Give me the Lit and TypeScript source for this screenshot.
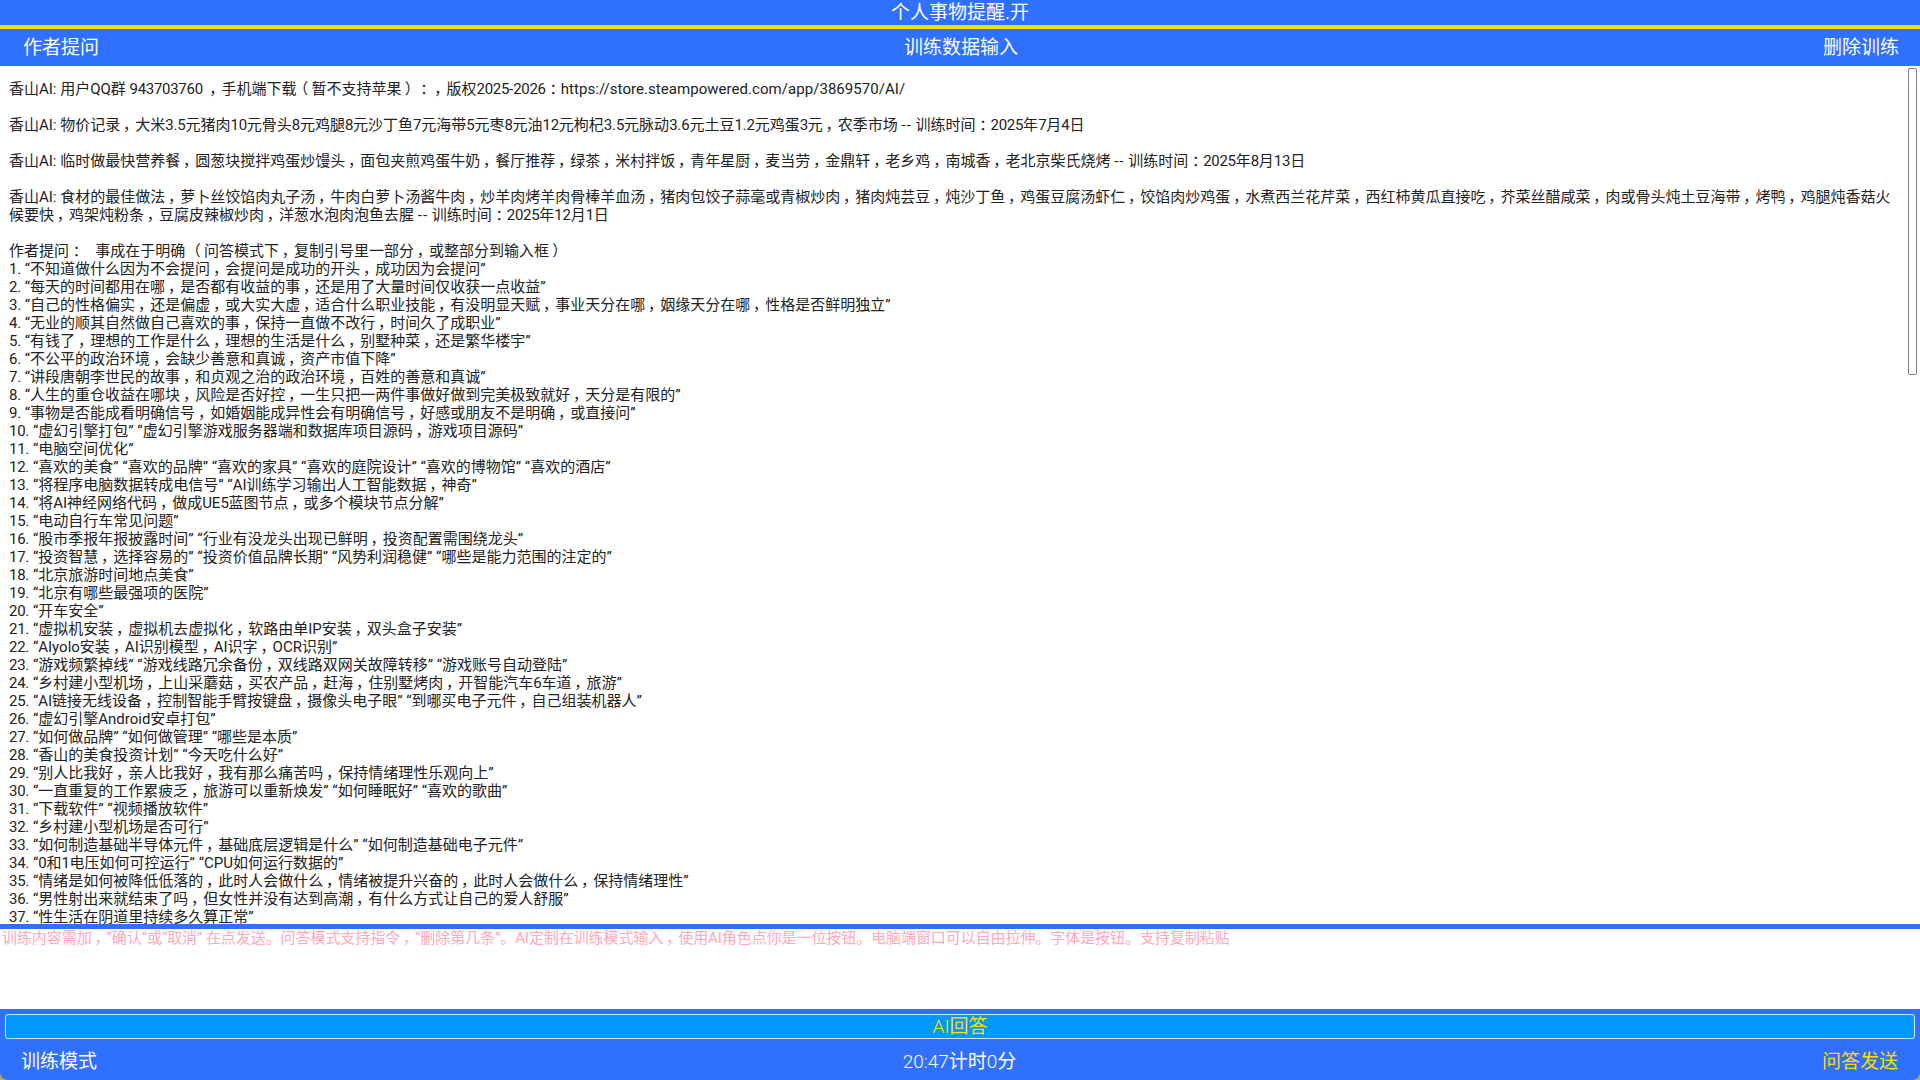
import { LitElement, html, css } from "lit";
import { customElement } from "lit/decorators.js";

const BLOCKS: string[][] = [
  ["香山AI: 用户QQ群 943703760 ，手机端下载（暂不支持苹果）：，版权2025-2026：https://store.steampowered.com/app/3869570/AI/"],
  ["香山AI: 物价记录，大米3.5元猪肉10元骨头8元鸡腿8元沙丁鱼7元海带5元枣8元油12元枸杞3.5元脉动3.6元土豆1.2元鸡蛋3元，农季市场 -- 训练时间：2025年7月4日"],
  ["香山AI: 临时做最快营养餐，圆葱块搅拌鸡蛋炒馒头，面包夹煎鸡蛋牛奶，餐厅推荐，绿茶，米村拌饭，青年星厨，麦当劳，金鼎轩，老乡鸡，南城香，老北京柴氏烧烤 -- 训练时间：2025年8月13日"],
  ["香山AI: 食材的最佳做法，萝卜丝饺馅肉丸子汤，牛肉白萝卜汤酱牛肉，炒羊肉烤羊肉骨棒羊血汤，猪肉包饺子蒜毫或青椒炒肉，猪肉炖芸豆，炖沙丁鱼，鸡蛋豆腐汤虾仁，饺馅肉炒鸡蛋，水煮西兰花芹菜，西红柿黄瓜直接吃，芥菜丝醋咸菜，肉或骨头炖土豆海带，烤鸭，鸡腿炖香菇火候要快，鸡架炖粉条，豆腐皮辣椒炒肉，洋葱水泡肉泡鱼去腥 -- 训练时间：2025年12月1日"],
  [
    "作者提问：   事成在于明确 （问答模式下，复制引号里一部分，或整部分到输入框）",
    "1. “不知道做什么因为不会提问，会提问是成功的开头，成功因为会提问”",
    "2. “每天的时间都用在哪，是否都有收益的事，还是用了大量时间仅收获一点收益”",
    "3. “自己的性格偏实，还是偏虚，或大实大虚，适合什么职业技能，有没明显天赋，事业天分在哪，姻缘天分在哪，性格是否鲜明独立”",
    "4. “无业的顺其自然做自己喜欢的事，保持一直做不改行，时间久了成职业”",
    "5. “有钱了，理想的工作是什么，理想的生活是什么，别墅种菜，还是繁华楼宇”",
    "6. “不公平的政治环境，会缺少善意和真诚，资产市值下降”",
    "7. “讲段唐朝李世民的故事，和贞观之治的政治环境，百姓的善意和真诚”",
    "8. “人生的重仓收益在哪块，风险是否好控，一生只把一两件事做好做到完美极致就好，天分是有限的”",
    "9. “事物是否能成看明确信号，如婚姻能成异性会有明确信号，好感或朋友不是明确，或直接问”",
    "10. “虚幻引擎打包” “虚幻引擎游戏服务器端和数据库项目源码，游戏项目源码”",
    "11. “电脑空间优化”",
    "12. “喜欢的美食” “喜欢的品牌” “喜欢的家具” “喜欢的庭院设计” “喜欢的博物馆” “喜欢的酒店”",
    "13. “将程序电脑数据转成电信号” “AI训练学习输出人工智能数据，神奇”",
    "14. “将AI神经网络代码，做成UE5蓝图节点，或多个模块节点分解”",
    "15. “电动自行车常见问题”",
    "16. “股市季报年报披露时间” “行业有没龙头出现已鲜明，投资配置需围绕龙头”",
    "17. “投资智慧，选择容易的” “投资价值品牌长期” “风势利润稳健” “哪些是能力范围的注定的”",
    "18. “北京旅游时间地点美食”",
    "19. “北京有哪些最强项的医院”",
    "20. “开车安全”",
    "21. “虚拟机安装，虚拟机去虚拟化，软路由单IP安装，双头盒子安装”",
    "22. “AIyolo安装，AI识别模型，AI识字，OCR识别”",
    "23. “游戏频繁掉线” “游戏线路冗余备份，双线路双网关故障转移” “游戏账号自动登陆”",
    "24. “乡村建小型机场，上山采蘑菇，买农产品，赶海，住别墅烤肉，开智能汽车6车道，旅游”",
    "25. “AI链接无线设备，控制智能手臂按键盘，摄像头电子眼” “到哪买电子元件，自己组装机器人”",
    "26. “虚幻引擎Android安卓打包”",
    "27. “如何做品牌” “如何做管理” “哪些是本质”",
    "28. “香山的美食投资计划” “今天吃什么好”",
    "29. “别人比我好，亲人比我好，我有那么痛苦吗，保持情绪理性乐观向上”",
    "30. “一直重复的工作累疲乏，旅游可以重新焕发” “如何睡眠好” “喜欢的歌曲”",
    "31. “下载软件” “视频播放软件”",
    "32. “乡村建小型机场是否可行”",
    "33. “如何制造基础半导体元件，基础底层逻辑是什么” “如何制造基础电子元件”",
    "34. “0和1电压如何可控运行” “CPU如何运行数据的”",
    "35. “情绪是如何被降低低落的，此时人会做什么，情绪被提升兴奋的，此时人会做什么，保持情绪理性”",
    "36. “男性射出来就结束了吗，但女性并没有达到高潮，有什么方式让自己的爱人舒服”",
    "37. “性生活在阴道里持续多久算正常”",
  ],
];

const HINT =
  "训练内容需加，“确认”或“取消” 在点发送。问答模式支持指令，“删除第几条”。AI定制在训练模式输入，使用AI角色点你是一位按钮。电脑端窗口可以自由拉伸。字体是按钮。支持复制粘贴";

/* The reference's fallback font centres full-width punctuation in its cell, sets digits narrower and keeps "--" apart. */
const punct = (line: string) =>
  line
    .split(/(https:\S+|--|[，：（）]|\d+)/)
    .map((part, i) => {
      if (i % 2 === 0) return part;
      if (part.startsWith("http")) return html`<span class="u">${part}</span>`;
      if (part === "--") return html`<span class="h">${part}</span>`;
      if (/\d/.test(part)) return html`<span class="d">${part}</span>`;
      return html`<span class="p">${part}</span>`;
    });

@customElement("app-root")
export class AppRoot extends LitElement {
  static styles = css`
    :host {
      display: flex;
      flex-direction: column;
      width: 1920px;
      height: 1080px;
      overflow: hidden;
      background: #b4aa5a;
      font-family: Roboto, "Noto Sans CJK SC", sans-serif;
      font-variant-ligatures: none;
      font-feature-settings: "liga" 0, "clig" 0, "calt" 0;
      text-spacing-trim: space-all;
      color: #222;
    }
    .p {
      display: inline-block;
      width: 1em;
      text-align: center;
      font-feature-settings: "palt";
    }
    .d {
      letter-spacing: -0.3px;
    }
    .u {
      letter-spacing: 0.05px;
    }
    .h {
      letter-spacing: 1px;
    }
    .thin {
      font-weight: 300;
    }
    .title {
      height: 25px;
      flex: none;
      box-sizing: border-box;
      padding-top: 1px;
      background: #3070ff;
      color: #fff;
      font-size: 19px;
      line-height: 24px;
      text-align: center;
    }
    .rule {
      height: 4px;
      flex: none;
      background: #ffdd00;
    }
    .bar {
      flex: none;
      background: #3070ff;
      color: #fff;
      font-size: 19px;
      display: grid;
      grid-template-columns: 1fr auto 1fr;
      align-items: center;
    }
    .head {
      height: 37px;
      padding: 0 21px 4px 23px;
      box-sizing: border-box;
    }
    .foot {
      height: 41px;
      padding: 0 22px 0 21px;
      box-sizing: border-box;
      border-radius: 0 0 8px 8px;
    }
    .end {
      text-align: right;
    }
    .accent {
      color: #ffdd00;
    }
    .log {
      flex: 1;
      min-height: 0;
      position: relative;
      overflow: hidden;
      background: #fff;
      padding: 14px 20px 0 9px;
      font-size: 15px;
      line-height: 18px;
    }
    .log p {
      margin: 0 0 18px;
      white-space: pre-wrap;
    }
    .thumb {
      position: absolute;
      top: 2px;
      right: 3px;
      width: 9px;
      height: 307px;
      box-sizing: border-box;
      border: 1px solid #808080;
      border-radius: 2px;
      background: #fff;
    }
    .divider {
      height: 5px;
      flex: none;
      background: #3070ff;
    }
    .input {
      height: 80px;
      flex: none;
      background: #fff;
      font-size: 15px;
      line-height: 18px;
      letter-spacing: -0.07px;
      color: #ffa8b8;
      padding-left: 2px;
      white-space: nowrap;
    }
    .answer-wrap {
      flex: none;
      background: #3070ff;
      padding: 5px 5px 0;
    }
    .answer {
      height: 25px;
      box-sizing: border-box;
      border: 1px solid #d8e4ff;
      border-radius: 3px;
      background: #0099ff;
      color: #ffdd00;
      font-size: 19px;
      line-height: 23px;
      text-align: center;
    }
  `;

  render() {
    return html`
      <div class="title">个人事物提醒.开</div>
      <div class="rule"></div>
      <div class="bar head">
        <span>作者提问</span><span>训练数据输入</span><span class="end">删除训练</span>
      </div>
      <div class="log">
        ${BLOCKS.map((b) => html`<p>${b.map((l) => html`${punct(l)}<br />`)}</p>`)}
        <div class="thumb"></div>
      </div>
      <div class="divider"></div>
      <div class="input">${punct(HINT)}</div>
      <div class="answer-wrap"><div class="answer"><span class="thin">AI</span>回答</div></div>
      <div class="bar foot">
        <span>训练模式</span>
        <span><span class="thin">20:47</span>计时<span class="thin">0</span>分</span>
        <span class="end accent">问答发送</span>
      </div>
    `;
  }
}
